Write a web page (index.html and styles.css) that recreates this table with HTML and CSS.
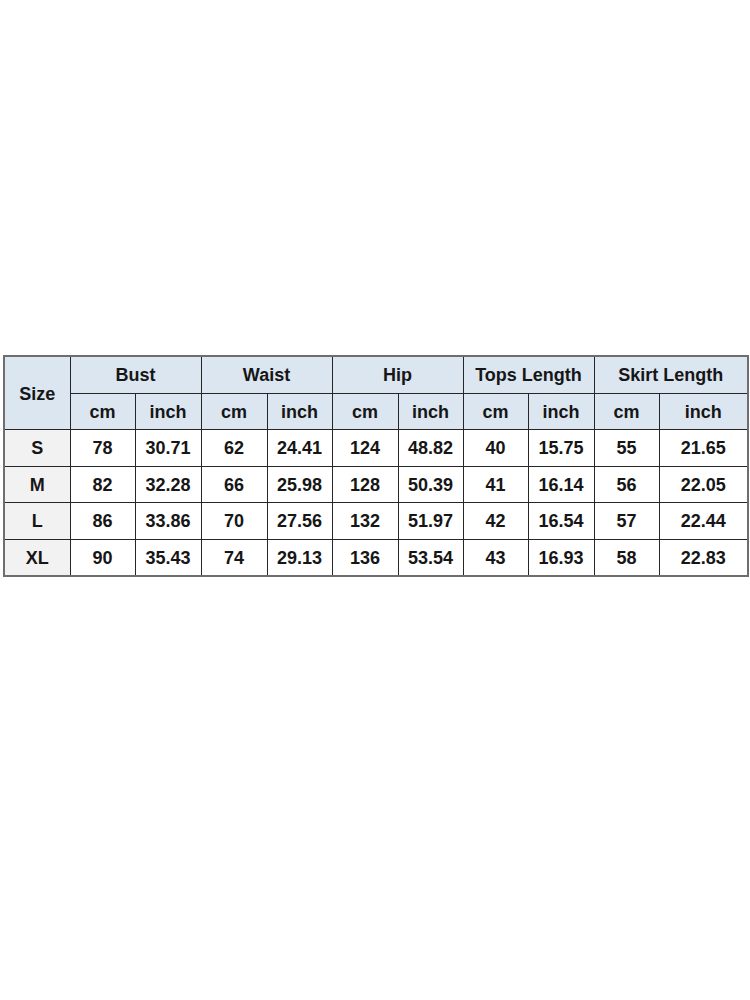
FILE: index.html
```html
<!DOCTYPE html>
<html>
<head>
<meta charset="utf-8">
<link rel="stylesheet" href="styles.css">
</head>
<body>
<div class="page">
<table class="size-table">
  <colgroup>
    <col class="c66"><col class="c65"><col class="c66"><col class="c66"><col class="c65"><col class="c66"><col class="c65"><col class="c65"><col class="c66"><col class="c65"><col class="c90">
  </colgroup>
  <thead>
    <tr class="r1">
      <th rowspan="2">Size</th>
      <th colspan="2">Bust</th>
      <th colspan="2">Waist</th>
      <th colspan="2">Hip</th>
      <th colspan="2">Tops Length</th>
      <th colspan="2">Skirt Length</th>
    </tr>
    <tr class="r2">
      <th>cm</th><th>inch</th>
      <th>cm</th><th>inch</th>
      <th>cm</th><th>inch</th>
      <th>cm</th><th>inch</th>
      <th>cm</th><th>inch</th>
    </tr>
  </thead>
  <tbody>
    <tr><th class="size">S</th><td>78</td><td>30.71</td><td>62</td><td>24.41</td><td>124</td><td>48.82</td><td>40</td><td>15.75</td><td>55</td><td>21.65</td></tr>
    <tr><th class="size">M</th><td>82</td><td>32.28</td><td>66</td><td>25.98</td><td>128</td><td>50.39</td><td>41</td><td>16.14</td><td>56</td><td>22.05</td></tr>
    <tr><th class="size">L</th><td>86</td><td>33.86</td><td>70</td><td>27.56</td><td>132</td><td>51.97</td><td>42</td><td>16.54</td><td>57</td><td>22.44</td></tr>
    <tr><th class="size">XL</th><td>90</td><td>35.43</td><td>74</td><td>29.13</td><td>136</td><td>53.54</td><td>43</td><td>16.93</td><td>58</td><td>22.83</td></tr>
  </tbody>
</table>
</div>
</body>
</html>
```
FILE: styles.css
```css
html, body {
  margin: 0;
  padding: 0;
  background: #ffffff;
}
.page {
  padding: 355px 0 0 3px;
}
.size-table {
  border-collapse: collapse;
  table-layout: fixed;
  width: 745px;
  border: 2px solid #6e6e6e;
  font-family: "Liberation Sans", Arial, sans-serif;
  font-weight: bold;
  font-size: 18px;
  color: #161616;
}
.c66 { width: 66px; }
.c65 { width: 65px; }
.c90 { width: 89px; }
.size-table th,
.size-table td {
  border: 1px solid #262626;
  text-align: center;
  vertical-align: middle;
  padding: 2px 0 0;
  height: 33.5px;
  font-weight: bold;
}
.size-table thead th {
  background: #dce6f1;
}
.size-table th.size {
  background: #f2f2f2;
}
.size-table td {
  background: #ffffff;
}
```
